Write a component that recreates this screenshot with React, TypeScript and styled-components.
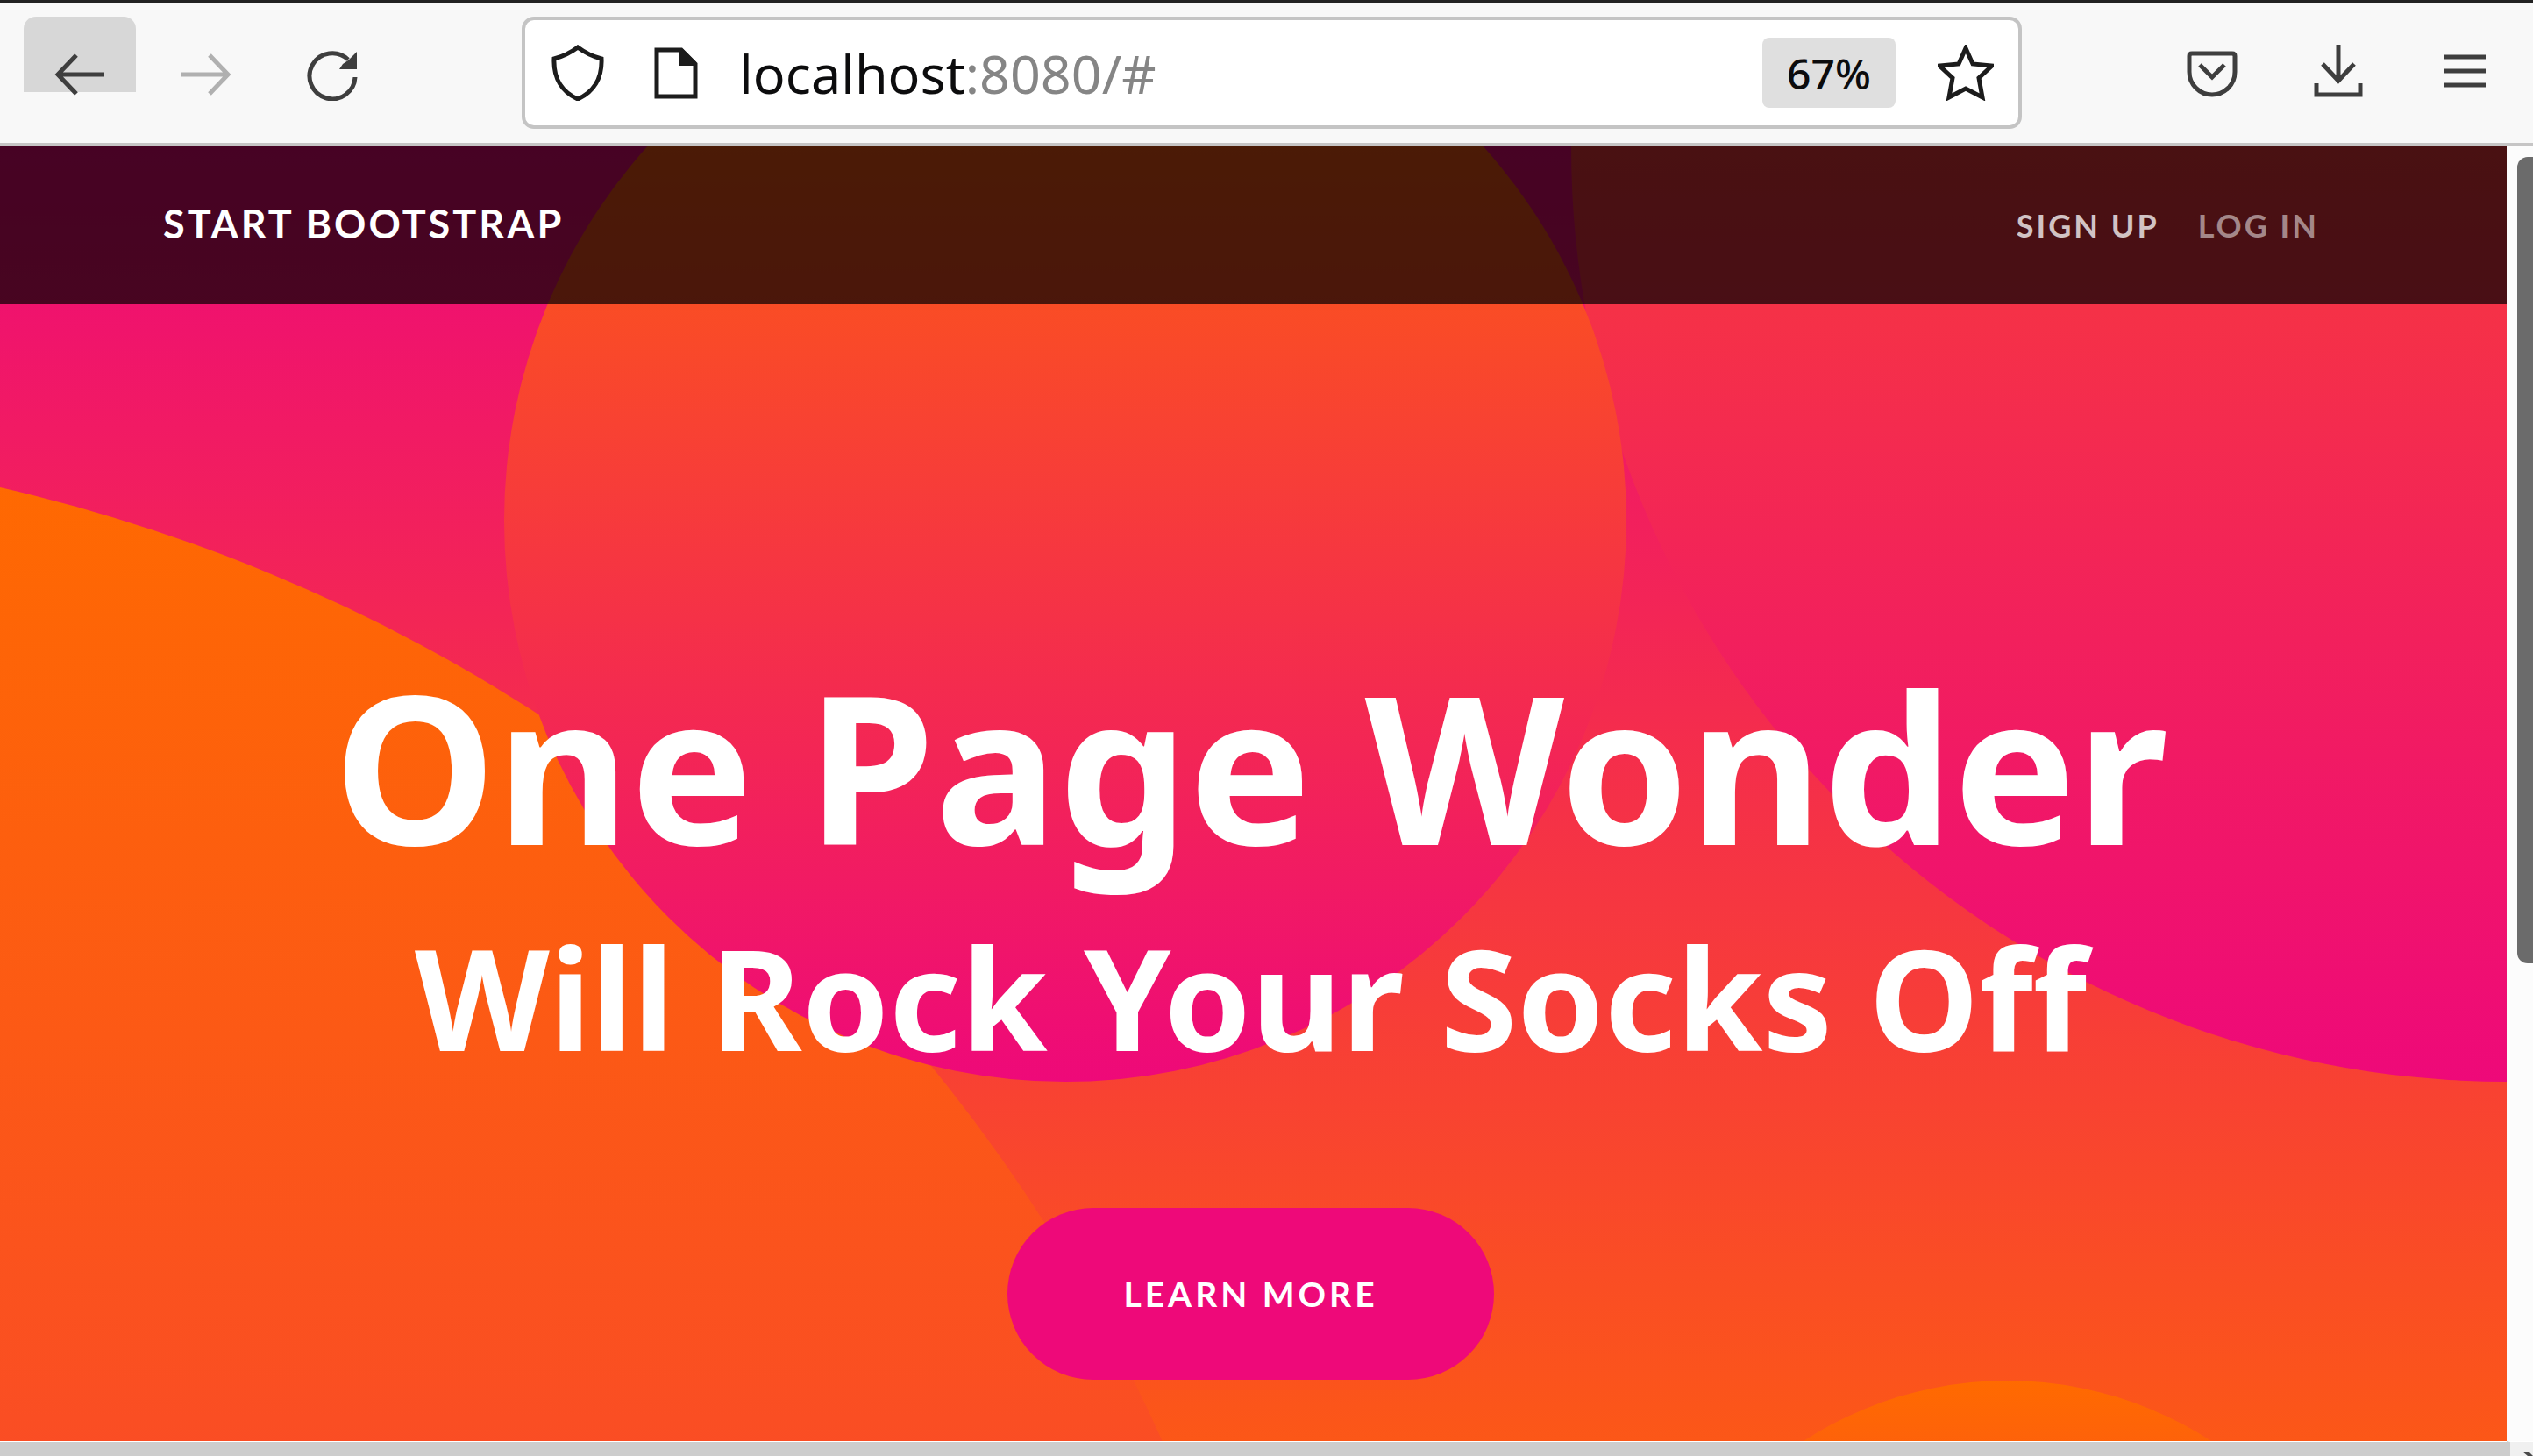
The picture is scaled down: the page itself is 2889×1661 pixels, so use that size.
import React from "react";
import styled, { createGlobalStyle, css } from "styled-components";

const PINK = "#ee0979";
const ORANGE = "#ff6a00";

const GlobalStyle = createGlobalStyle`
  *, *::before, *::after { box-sizing: border-box; }
  html, body { margin: 0; overflow: hidden; }
  body { font-family: Lato, "Open Sans", sans-serif; background: #fff; }
`;

const Browser = styled.div`
  display: flex;
  flex-direction: column;
  height: 100vh;
  border-top: 3px solid #222;
`;

const Toolbar = styled.div`
  display: flex;
  align-items: flex-start;
  flex: none;
  padding: 16px 14px 16px 27px;
  background: #f8f8f8;
  border-bottom: 4px solid #c6c5c5;
`;

const Group = styled.div<{ $end?: boolean }>`
  display: flex;
  gap: 16px;
  ${(p) => p.$end && css`margin-left: auto;`}
`;

const ToolButton = styled.button<{ $active?: boolean; $faded?: boolean }>`
  display: flex;
  align-items: flex-end;
  justify-content: center;
  width: 128px;
  height: 96px;
  padding: 0;
  border: 0;
  color: ${(p) => (p.$faded ? "#b0b0b0" : "#3e3e3e")};
  background: ${(p) =>
    p.$active ? "linear-gradient(#d7d7d7, #d7d7d7) top / 100% 86px no-repeat" : "transparent"};
  border-radius: 14px 14px 0 0;
`;

const Icon = styled.svg`
  display: block;
  width: 64px;
  height: 64px;
  fill: none;
  stroke: currentColor;
  stroke-width: 5;
  flex: none;
`;

const AddressBar = styled.div`
  display: flex;
  align-items: center;
  flex: 0 1 1711px;
  height: 128px;
  margin-left: 152px;
  padding: 0 28px;
  gap: 40px;
  background: #fff;
  border: 4px solid #c4c4c4;
  border-radius: 14px;
  color: #1c1c1c;
`;

const Marks = styled.div`
  display: flex;
  align-items: center;
  gap: 48px;
`;

const Address = styled.a`
  flex: 1;
  padding-top: 2px;
  font-family: "Noto Sans", sans-serif;
  font-size: 61px;
  line-height: 80px;
  color: #858585;
  text-decoration: none;
`;

const Host = styled.span`
  color: #0c0c0d;
`;

const ZoomLevel = styled.button`
  width: 152px;
  height: 80px;
  padding: 2px 0 0;
  border: 0;
  border-radius: 8px;
  background: #dfdfdf;
  color: #0c0c0d;
  font: 500 48px/78px "Noto Sans", sans-serif;
`;

const Viewport = styled.div`
  display: grid;
  grid-template-columns: minmax(0, 1fr) 30px;
  grid-template-rows: minmax(0, 1fr) 17px;
  flex: 1;
  min-height: 0;
`;

const Page = styled.div`
  position: relative;
  overflow: hidden;
`;

const Nav = styled.nav`
  position: absolute;
  z-index: 2;
  inset: 0 0 auto;
  display: flex;
  align-items: center;
  justify-content: space-between;
  height: 180px;
  padding: 0 214px 0 186px;
  background: rgba(0, 0, 0, 0.7);
`;

const Brand = styled.a`
  padding-bottom: 4px;
  color: #fff;
  font-size: 45px;
  font-weight: 700;
  line-height: 64px;
  letter-spacing: 3px;
  text-decoration: none;
`;

const NavLinks = styled.div`
  display: flex;
  gap: 44px;
`;

const NavLink = styled.a<{ $strong?: boolean }>`
  color: rgba(255, 255, 255, ${(p) => (p.$strong ? 0.75 : 0.5)});
  font-size: 36px;
  font-weight: 700;
  line-height: 64px;
  letter-spacing: 3px;
  text-decoration: none;
`;

const Masthead = styled.header`
  position: relative;
  overflow: hidden;
  display: flex;
  flex-direction: column;
  align-items: center;
  padding: 548px 6px 427px 0;
  background: linear-gradient(0deg, ${ORANGE} 0%, ${PINK} 100%);
  color: #fff;
  text-align: center;
`;

const Circle = styled.div<{ $size: number }>`
  position: absolute;
  width: ${(p) => p.$size}px;
  height: ${(p) => p.$size}px;
  border-radius: 50%;
  background: linear-gradient(0deg, ${PINK} 0%, ${ORANGE} 100%);
`;

const LowerLeftCircle = styled(Circle)`
  bottom: -2347px;
  left: -2347px;
`;

const TopRightCircle = styled(Circle)`
  top: -1067px;
  right: -1067px;
`;

const TopCircle = styled(Circle)`
  top: -213px;
  left: 20.1%;
`;

const LowerRightCircle = styled(Circle)`
  bottom: -427px;
  right: 5%;
`;

const Title = styled.h1`
  position: relative;
  margin: 0;
  font-family: "Noto Sans", sans-serif;
  font-size: 235px;
  font-weight: 700;
  line-height: 316px;
`;

const Subtitle = styled.h2`
  position: relative;
  margin: 0;
  font-family: "Noto Sans", sans-serif;
  font-size: 159px;
  font-weight: 700;
  line-height: 214px;
`;

const LearnMore = styled.a`
  position: relative;
  margin-top: 133px;
  padding: 66px 132px;
  border-radius: 98px;
  background: ${PINK};
  color: #fff;
  font-size: 39px;
  font-weight: 700;
  line-height: 64px;
  letter-spacing: 4px;
  text-decoration: none;
`;

const VerticalScroll = styled.div`
  padding: 12px 0 0 12px;
  background: #fcfcfc;
`;

const VerticalThumb = styled.div`
  height: 62.8%;
  background: #6b6b6b;
  border-radius: 12px 0 0 12px;
`;

const HorizontalScroll = styled.div`
  border-top: 1px solid #fff;
  background: #cdcdcd;
`;

const Corner = styled.div`
  border-top: 1px solid #fff;
  border-left: 4px solid #cdcdcd;
  background: #f0f0f0;
`;

const CornerIcon = styled.svg`
  display: block;
  width: 26px;
  height: 16px;
`;

export default function App() {
  return (
    <>
      <GlobalStyle />
      <Browser>
        <Toolbar>
          <Group>
            <ToolButton $active aria-label="Back">
              <Icon viewBox="0 0 64 64">
                <path d="M60 34H8M28 12L7 34l21 22" />
              </Icon>
            </ToolButton>
            <ToolButton $faded aria-label="Forward">
              <Icon viewBox="0 0 64 64">
                <path d="M4 34h52M36 12l21 22-21 22" />
              </Icon>
            </ToolButton>
            <ToolButton aria-label="Reload">
              <Icon viewBox="0 0 64 64">
                <path d="M58 37A26 26 0 1 1 50 17" />
                <path d="M60 8v20H40l4-6 6-4z" fill="currentColor" stroke="none" />
              </Icon>
            </ToolButton>
          </Group>
          <AddressBar>
            <Marks>
              <Icon viewBox="0 0 64 64">
                <path d="M32 3C24 9 13 14 5 16C4 38 14 54 32 62C50 54 60 38 59 16C51 14 40 9 32 3z" />
              </Icon>
              <Icon viewBox="0 0 64 64">
                <path d="M10 6h28l16 16v37H10z" />
                <path d="M36 5h4l15 15v4H36z" fill="currentColor" stroke="none" />
              </Icon>
            </Marks>
            <Address href="#">
              <Host>localhost</Host>:8080/#
            </Address>
            <Marks>
              <ZoomLevel>67%</ZoomLevel>
              <Icon viewBox="0 0 64 64">
                <path d="M32 4l8 18 22 2-15 14 4 22-19-10-19 10 4-22L2 24l22-2z" />
              </Icon>
            </Marks>
          </AddressBar>
          <Group $end>
            <ToolButton aria-label="Save to Pocket">
              <Icon viewBox="0 0 64 64">
                <path d="M9 10h46q3 0 3 3v18a26 26 0 0 1-52 0V13q0-3 3-3zM18 23l14 14 14-14" />
              </Icon>
            </ToolButton>
            <ToolButton aria-label="Downloads">
              <Icon viewBox="0 0 64 64">
                <path d="M32 0v43M14 22l18 19 18-19M7 44v13h50V44" />
              </Icon>
            </ToolButton>
            <ToolButton aria-label="Menu">
              <Icon viewBox="0 0 64 64">
                <path d="M8 14h48M8 30h48M8 46h48" />
              </Icon>
            </ToolButton>
          </Group>
        </Toolbar>
        <Viewport>
          <Page>
            <Nav>
              <Brand href="#">START BOOTSTRAP</Brand>
              <NavLinks>
                <NavLink href="#" $strong>SIGN UP</NavLink>
                <NavLink href="#">LOG IN</NavLink>
              </NavLinks>
            </Nav>
            <Masthead>
              <LowerLeftCircle $size={3840} />
              <TopRightCircle $size={2134} />
              <TopCircle $size={1280} />
              <LowerRightCircle $size={853} />
              <Title>One Page Wonder</Title>
              <Subtitle>Will Rock Your Socks Off</Subtitle>
              <LearnMore href="#">LEARN MORE</LearnMore>
            </Masthead>
          </Page>
          <VerticalScroll>
            <VerticalThumb />
          </VerticalScroll>
          <HorizontalScroll />
          <Corner>
            <CornerIcon viewBox="0 0 26 16">
              <path d="M14 11h7l5 5h-6z" fill="#4a4a4a" />
            </CornerIcon>
          </Corner>
        </Viewport>
      </Browser>
    </>
  );
}
